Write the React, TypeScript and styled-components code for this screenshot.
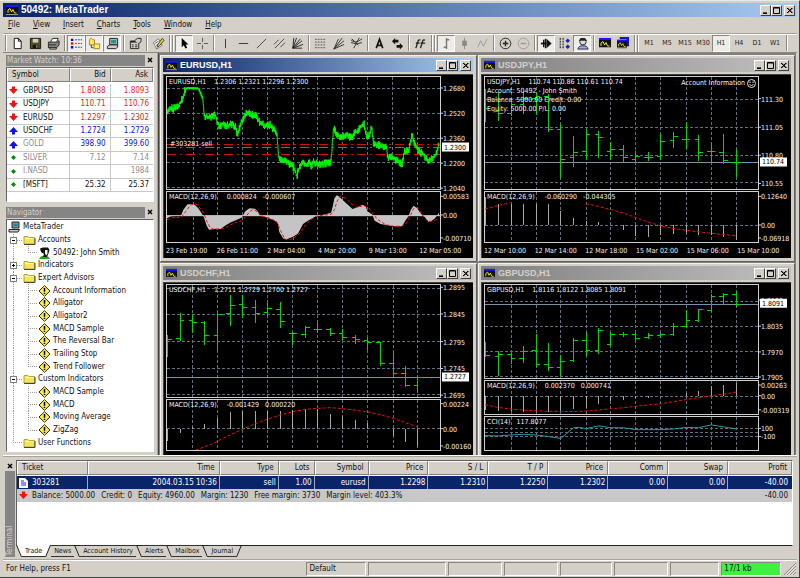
import React from 'react';
import styled, { createGlobalStyle, css } from 'styled-components';

const face = '#d4d0c8';
const shadow = '#808080';
const uiFont = '"DejaVu Sans Condensed", "DejaVu Sans", sans-serif';

const GlobalStyle = createGlobalStyle`
  * { box-sizing: border-box; }
  body { margin: 0; background: ${face}; }
  button { font: inherit; color: inherit; padding: 0; margin: 0; border: 0; background: none; white-space: nowrap; }
  ul { list-style: none; margin: 0; padding: 0; }
`;

/* ---------- frame ---------- */
const Shell = styled.div`
  display: flex; flex-direction: column; height: 100vh; overflow: hidden;
  background: ${face}; color: #111; font: 8px/12px ${uiFont};
  padding: 2px 2px 1px 3px;
  border-right: 1px solid #404040; border-bottom: 1px solid #404040; border-top: 1px solid #ece9e2;
`;
const TitleBar = styled.header<{ $active?: boolean; $main?: boolean }>`
  display: flex; align-items: center; gap: 3px; flex: none;
  height: 14px; margin: 0; padding: 0 2px 0 3px;
  font: bold ${p => (p.$main ? 10 : 9)}px/14px "Liberation Sans", Arial, sans-serif;
  color: ${p => (p.$active ? '#fff' : face)};
  background: ${p => (p.$active ? 'linear-gradient(90deg,#0a246a,#a6caf0)' : 'linear-gradient(90deg,#808080,#c0c0c0)')};
`;
const TitleText = styled.span`flex: 1; white-space: nowrap;`;
const CaptionButton = styled.button<{ $gap?: boolean }>`
  width: 11px; height: 11px; display: flex; margin-left: ${p => (p.$gap ? 2 : 0)}px;
  background: ${face}; border: 1px solid; border-color: #fff #404040 #404040 #fff;
`;
const CaptionButtons = styled.div`display: flex;`;

const Glyph = ({ d }: { d: string }) => (
  <svg width="9" height="9" viewBox="0 0 9 9" fill="none" stroke="#000"><path d={d} /></svg>
);
const WindowButtons = () => (
  <CaptionButtons>
    <CaptionButton aria-label="Minimize"><Glyph d="M2 7.5H6M2 6.9H6" /></CaptionButton>
    <CaptionButton aria-label="Maximize"><Glyph d="M1.5 1.5H7.5V7.5H1.5ZM1.5 2H7.5" /></CaptionButton>
    <CaptionButton $gap aria-label="Close"><Glyph d="M2 2L7 7M7 2L2 7M2.5 2L7.5 7M7.5 2L2.5 7" /></CaptionButton>
  </CaptionButtons>
);
const ChartIcon = ({ size = 12, stacked }: { size?: number; stacked?: boolean }) => (
  <svg width={size} height={size} viewBox="0 0 12 12">
    {stacked && <path d="M3 0H12V9H10V2H3Z" fill="#1818ff" stroke="#111" strokeWidth="0.5" />}
    <svg width={stacked ? 10 : 12} height={stacked ? 10 : 12} y={stacked ? 2 : 0} viewBox="0 0 12 12">
      <rect x="0" y="1" width="12" height="10" fill="#111" />
      <rect x="0" y="1" width="12" height="2" fill="#1818ff" />
      <path d="M0 10.500H12" stroke="#999" />
      <path d="M2 9V6L4 4.500L5.500 8L7 5.500L8.500 9H10.500" stroke="#f0e800" fill="none" />
    </svg>
  </svg>
);

/* ---------- menu and toolbar ---------- */
const Menu = styled.nav`
  display: flex; gap: 13px; height: 16px; align-items: center; padding-left: 5px; flex: none;
`;
const Mnemonic = styled.span`text-decoration: underline;`;
const Toolbar = styled.div`
  display: flex; align-items: center; height: 20px; flex: none;
  border-top: 1px solid #a8a49c; border-bottom: 1px solid #8c8880; box-shadow: inset 0 1px #fff;
`;
const Tool = styled.button<{ $on?: boolean }>`
  width: 18px; height: 17px; display: flex; align-items: center; justify-content: center;
  font-size: 7px; color: #222;
  ${p => p.$on && css`background: #eeece8; border: 1px solid; border-color: #8a867e #fff #fff #8a867e;`}
`;
const Sep = styled.i`
  width: 1px; height: 16px; margin: 0 2px; background: #8c8880; box-shadow: 1px 0 #fff;
`;
const Grip = styled.i`
  width: 4px; height: 17px; margin: 0 2px 0 2px; border-left: 1px solid #8c8880; border-right: 1px solid #8c8880;
  box-shadow: inset 1px 0 #fff, 1px 0 #fff;
`;

const icons: Record<string, React.ReactNode> = {
  new: <path d="M3.500 1.500H8L11 4.500V12.500H3.500ZM8 1.500V4.500H11" fill="#fff" stroke="#111" />,
  save: <><path d="M1.500 1.500H12.500V12.500H1.500Z" fill="#55501c" stroke="#111" /><path d="M4 2H10V6H4Z" fill="#d4d0c8" /><path d="M4 8.500H10V12H4Z" fill="#111" /><path d="M8.500 9V11.500" stroke="#ddd" /></>,
  print: <><path d="M4 5L6 1.500H12L10.500 5" fill="#fff" stroke="#222" /><path d="M1.500 5.500H11L13 4V8.500L10.500 11.500H1.500Z" fill="#888" stroke="#222" /><path d="M3 11.500H10V13H3Z" fill="#eee" stroke="#222" /><path d="M2 8.500H10" stroke="#222" /></>,
  list: <><path d="M1 3H3.500M1 11H3.500" stroke="#00f" strokeWidth="2.500" /><path d="M1 7H3.500" stroke="#e00" strokeWidth="2.500" /><path d="M5.500 3H13M5.500 11H13" stroke="#33a" strokeDasharray="2 1" /><path d="M5.500 7H13" stroke="#a33" strokeDasharray="2 1" /></>,
  navigator: <><path d="M1.500 3V8.500H7V3H5L4 1.500H2.500Z" fill="#ffe65c" stroke="#a08a20" /><path d="M3.500 8.500V11.500H6" stroke="#333" fill="none" /><path d="M6.500 7.500H12.500V12.500H6.500Z" fill="#ffec70" stroke="#a08a20" /></>,
  terminal: <><path d="M4 1.500H12.500V8.500H4Z" fill="#bbb" stroke="#222" /><path d="M5.500 3H11V7H5.500Z" fill="#1a9a9a" /><path d="M1.500 10L4 8.500H12.500V11L10.500 12.500H1.500Z" fill="#ccc" stroke="#222" /></>,
  props: <><path d="M1.500 4.500H10.500V12.500H1.500Z" fill="#d4d0c8" stroke="#222" /><path d="M1.500 5H10.500" stroke="#222" strokeWidth="2" /><path d="M3 8.500H5M3 10.500H5M6.500 8.500H9M6.500 10.500H9" stroke="#222" /><path d="M6 4L9 1.500H13V5L10.500 7" fill="#ccc" stroke="#222" /></>,
  edit: <><path d="M1.500 6L7 2L11 9L5 13Z" fill="#fff" stroke="#777" /><path d="M3 7L7 4.500M4.500 9L8 6.500" stroke="#44a" /><path d="M5.500 11L6 8.500L11 1.500L13 3.500L8 9.500Z" fill="#f0d820" stroke="#333" /></>,
  cursor: <path d="M4 1V11L6.200 8.800L8 12.500L9.800 11.700L8.200 8.200H11.200Z" fill="#000" />,
  cross: <path d="M7 1V5.500M7 8.500V13M1 7H5.500M8.500 7H13" stroke="#555" />,
  vline: <path d="M7 2V12" stroke="#333" />,
  hline: <path d="M2 7H12" stroke="#333" />,
  trend: <path d="M2 12L12 2" stroke="#444" />,
  channel: <path d="M1 8L6 3M2 12L12 2M8 11L13 6" stroke="#444" fill="none" />,
  gann: <path d="M2 12L3 1M2 12L6 1M2 12L10 2M2 12L12 4M2 12L13 8M2 12H12" stroke="#222" />,
  fibo: <path d="M1 2.500H13M1 5.500H13M1 8.500H13M1 11.500H13" stroke="#555" strokeDasharray="2 1" />,
  fan: <path d="M2 13L11 1M2 13L13 4M2 13L13 8M2 13L7 2" stroke="#333" />,
  arcs: <path d="M1 3Q5 8 13 2M1 6Q7 9 13 6M4 12L10 1M2 2L9 9" stroke="#333" fill="none" />,
  text: <path d="M3.500 12L7 2.500L10.500 12M4.500 9H9.500" stroke="#111" strokeWidth="1.800" fill="none" />,
  arrows: <><path d="M1 4.500L4.500 1V3H8V6H4.500V8Z" fill="#111" /><path d="M13 10L9.500 13.500V11.500H6V8.500H9.500V6.500Z" fill="#111" /></>,
  func: <path d="M2 12L4.500 4Q5 2.500 7 3.500M2 6.500H6M7 12L9.500 4Q10 2.500 12 3.500M7 6.500H12" stroke="#222" strokeWidth="1.400" fill="none" />,
  bars: <path d="M7 1V13M4 11H7M7 3H10" stroke="#777" strokeWidth="1.500" fill="none" />,
  candle: <><path d="M7 1V13" stroke="#888" /><path d="M4.500 4H9.500V9.500H4.500Z" fill="#888" /></>,
  line: <path d="M2 11L5 4L8 10L12 2" stroke="#999" fill="none" />,
  zoomin: <><circle cx="7" cy="7" r="5.700" fill="none" stroke="#222" /><path d="M4 7H10M7 4V10" stroke="#222" strokeWidth="1.500" /></>,
  zoomout: <><circle cx="7" cy="7" r="5.700" fill="none" stroke="#999" /><path d="M4 7H10" stroke="#999" strokeWidth="1.500" /></>,
  scroll: <><path d="M4 3V11M6 2V12" stroke="#111" strokeWidth="1.500" /><path d="M7 2L12.500 7L7 12Z" fill="#111" /><path d="M1 7H7" stroke="#111" strokeWidth="2" /></>,
  shift: <><path d="M2.500 1V13M5.500 1V13" stroke="#444" strokeWidth="1.500" strokeDasharray="2 1" /><path d="M8 4L10.500 1.500L13 4L10.500 6.500ZM8 10.500L10.500 8L13 10.500L10.500 13Z" fill="#22a" /></>,
  expert: <><circle cx="7.500" cy="5" r="3.500" fill="#ddd" stroke="#222" /><path d="M3 4H12L9.500 1H5Z" fill="#222" /><path d="M2 13Q3 9 7.500 9.500Q12 9 13 13Z" fill="#9ab0e8" stroke="#224" /></>,
};
const ToolIcon = ({ name }: { name: string }) => (
  <svg width="13" height="13" viewBox="0 0 14 14">{icons[name]}</svg>
);

const tools = [
  'new', 'save', 'print', '|', '*list', '*navigator', '*terminal', '|', 'props', '|', 'edit', '#',
  '*cursor', 'cross', '|', 'vline', 'hline', 'trend', 'channel', 'gann', '|', 'fibo', 'fan', 'arcs', '|',
  'text', 'arrows', '|', 'func', '#', '*bars', 'candle', 'line', '|', 'zoomin', 'zoomout', '|',
  '*scroll', 'shift', '*expert', '|', 'chart', 'charts', '#',
];
const periods = ['M1', 'M5', 'M15', 'M30', 'H1', 'H4', 'D1', 'W1'];

/* ---------- docked panels ---------- */
const Body = styled.div`display: flex; flex: 1; min-height: 0;`;
const Dock = styled.aside`
  width: 155px; flex: none; padding: 1px 3px 3px; display: flex; flex-direction: column; gap: 4px;
  border-right: 1px solid #a8a49c;
`;
const Panel = styled.section<{ $grow?: boolean }>`
  display: flex; flex-direction: column; min-height: 0; ${p => p.$grow && css`flex: 1;`}
`;
const PanelHead = styled.header`display: flex; align-items: center; height: 12px; flex: none; margin-bottom: 1px;`;
const PanelTitle = styled.span`flex: 1; height: 11px; line-height: 11px; background: #858585; color: ${face}; padding-left: 1px;`;
const PanelClose = styled.button`
  width: 9px; height: 11px; display: flex; align-items: center; justify-content: center;
`;
const CloseX = () => (
  <svg width="6" height="6" viewBox="0 0 6 6"><path d="M1 1L5 5M5 1L1 5" stroke="#000" strokeWidth="1.500" /></svg>
);
const Sunken = styled.div`
  background: #fff; border: 1px solid; border-color: #606060 #fff #fff #606060; overflow: hidden;
`;
const WatchBox = styled(Sunken)`height: 135px;`;
const HeadCell = styled.th<{ $left?: boolean }>`
  height: 14px; padding: 0 4px; font-weight: normal; text-align: ${p => (p.$left ? 'left' : 'right')};
  background: ${face}; border: 1px solid; border-color: #fff #808080 #808080 #fff;
`;
const Watch = styled.table`
  width: 100%; height: 124px; border-collapse: separate; border-spacing: 0; table-layout: fixed;
  tbody::before { content: ''; display: block; height: 2px; }
`;
const WatchCell = styled.td<{ $last?: boolean }>`
  padding: 0 4px; text-align: right; border-bottom: 1px solid #c8c8c8; line-height: 10px;
  border-right: ${p => (p.$last ? '0' : '1px solid #c8c8c8')};
`;
const WatchRow = styled.tr<{ $tone: string }>`
  color: ${p => p.$tone};
`;
const SymbolCell = styled(WatchCell)<{ $tone: string }>`
  text-align: left; padding: 0 0 0 2px; color: ${p => p.$tone};
`;
const SymbolName = styled.span`display: flex; align-items: center; gap: 5px;`;

const Arrow = ({ kind }: { kind: string }) => (
  <svg width="9" height="9" viewBox="0 0 9 9">
    {kind === 'down' && <path d="M3 0.500H6V3H9L4.500 8L0 3H3Z" fill="#f21010" />}
    {kind === 'up' && <path d="M3 8.500H6V6H9L4.500 1L0 6H3Z" fill="#1010f2" />}
    {kind === 'flat' && <path d="M4.500 2L7 4.500L4.500 7L2 4.500Z" fill="#0a8a0a" />}
  </svg>
);
const quotes: [string, string, string, string, string][] = [
  ['GBPUSD', '1.8088', '1.8093', 'down', '#f01818'],
  ['USDJPY', '110.71', '110.76', 'down', '#f01818'],
  ['EURUSD', '1.2297', '1.2302', 'down', '#f01818'],
  ['USDCHF', '1.2724', '1.2729', 'up', '#1010e0'],
  ['GOLD', '398.90', '399.60', 'up', '#1010e0'],
  ['SILVER', '7.12', '7.14', 'flat', '#8c8c8c'],
  ['I.NASD', '', '1984', 'flat', '#8c8c8c'],
  ['[MSFT]', '25.32', '25.37', 'flat', '#111'],
];

const TreeBox = styled(Sunken)`flex: 1; padding: 1px 0 2px;`;
const Tree = styled.ul`height: 100%; display: grid; grid-auto-rows: 1fr;`;
const Node = styled.li`display: flex; min-height: 0; align-items: center; white-space: nowrap;`;
const NodeIcon = styled.span`width: 15px; display: flex; justify-content: center; margin-right: 1px; flex: none;`;
const GuideSvg = styled.svg`width: 15px; height: 100%; flex: none;`;

const Guide = ({ kind }: { kind: string }) => (
  <GuideSvg stroke="#999" strokeDasharray="1 1" shapeRendering="crispEdges">
    {kind !== ' ' && <line x1="6.500" x2="6.500" y1="0" y2={kind === 'L' ? '50%' : '100%'} />}
    {kind !== ' ' && kind !== 'I' && <line x1="6" x2="15" y1="50%" y2="50%" />}
    {(kind === '-' || kind === '+') && (
      <svg x="3" y="3" width="7" height="7" viewBox="0 0 7 7" strokeDasharray="none">
        <rect x="0.500" y="0.500" width="6" height="6" fill="#fff" stroke="#808080" />
        <path d={kind === '+' ? 'M2 3.500H5M3.500 2V5' : 'M2 3.500H5'} stroke="#000" />
      </svg>
    )}
  </GuideSvg>
);
const TreeIcon = ({ kind }: { kind: string }) => (
  <svg width="13" height="12" viewBox="0 0 13 12">
    {kind === 'pc' && <><path d="M4 1H11V7H4Z" fill="#999" stroke="#222" /><path d="M5.500 2.500H9.500V5.500H5.500Z" fill="#1a8a9a" /><path d="M1 8.500H11.500L10 11H1Z" fill="#ccc" stroke="#222" /></>}
    {kind === 'folder' && <><path d="M1 10V2.500H5L6 3.500H11.500V10Z" fill="#f4e55a" stroke="#b5a53c" /><path d="M1 10.500H12V4" stroke="#444" fill="none" /><path d="M2 4.500H11" stroke="#fff8a8" /></>}
    {kind === 'user' && <><path d="M1 12Q3 8 6.500 9Q10 8 12 12Z" fill="#19a819" /><path d="M2 1.500L5 0.500H10L11.500 3L10 8L8.500 10H5L6 7L3 5Z" fill="#111" /><path d="M7 3H9.500V7L8 8.500L7 6Z" fill="#fff" /></>}
    {kind === 'ea' && <><path d="M6.500 0.700L12 6L6.500 11.300L1 6Z" fill="#fbee45" stroke="#2a2a10" /><path d="M6.500 3V6.700M6.500 7.800V9" stroke="#000" strokeWidth="1.500" /></>}
  </svg>
);
const nodes: [string, string, string][] = [
  ['', 'pc', 'MetaTrader'],
  ['-', 'folder', 'Accounts'],
  ['IL', 'user', '50492: John Smith'],
  ['+', 'folder', 'Indicators'],
  ['-', 'folder', 'Expert Advisors'],
  ['IT', 'ea', 'Account Information'],
  ['IT', 'ea', 'Alligator'],
  ['IT', 'ea', 'Alligator2'],
  ['IT', 'ea', 'MACD Sample'],
  ['IT', 'ea', 'The Reversal Bar'],
  ['IT', 'ea', 'Trailing Stop'],
  ['IL', 'ea', 'Trend Follower'],
  ['-', 'folder', 'Custom Indicators'],
  ['IT', 'ea', 'MACD Sample'],
  ['IT', 'ea', 'MACD'],
  ['IT', 'ea', 'Moving Average'],
  ['IL', 'ea', 'ZigZag'],
  ['L', 'folder', 'User Functions'],
];

/* ---------- chart windows ---------- */
const Workspace = styled.main`
  flex: 1; min-width: 0; overflow: hidden; background: ${shadow}; padding: 2px 1px 0;
  display: grid; grid-template-columns: 1fr 1fr; grid-auto-rows: 207px; gap: 1px;
  border-left: 1px solid #404040; border-right: 1px solid ${face};
`;
const ChildWindow = styled.section`
  display: flex; flex-direction: column; min-width: 0; background: ${face}; padding: 2px 3px 3px 2px;
  border: 1px solid; border-color: #f4f2ee #606060 #606060 #f4f2ee;
`;
const ChartArea = styled.div`
  flex: 1; min-height: 0; margin-top: 2px; padding: 1px 0 0 2px; background: #000; color: #f0f0f0;
  display: flex; flex-direction: column; gap: 1px; border: 1px solid #404040; border-width: 1px 0 0 1px;
  font-size: 7px; line-height: 9px;
`;
const Pane = styled.div<{ $grow: number }>`
  display: flex; min-height: 0; flex: ${p => p.$grow} 1 0;
`;
const Plot = styled.div`
  flex: 1; min-width: 0; position: relative; border: 1px solid #d0d0d0;
`;
const PlotSvg = styled.svg`
  display: block; width: 100%; height: 100%; position: absolute; inset: 0;
  & * { vector-effect: non-scaling-stroke; }
`;
const Overlay = styled.div`position: absolute; top: 1px; left: 2px; white-space: pre; line-height: 9px;`;
const OverlayRight = styled.div`
  position: absolute; top: 2px; right: 2px; display: flex; align-items: center; gap: 2px; white-space: nowrap;
`;
const OrderLabel = styled.div`position: absolute; top: 56%; left: 3px;`;
const AxisSvg = styled.svg`width: 32px; height: 100%; flex: none; overflow: visible; fill: #f0f0f0;`;
const Dates = styled.div`
  height: 14px; flex: none; display: grid; grid-template-columns: repeat(6, 1fr); align-items: center; white-space: nowrap;
  margin-right: 3px;
`;

type Pt = [number, number];
type Range = { x: number; w: number; y: number; h: number };
const pts = (list: Pt[]) => list.map(p => p.join(',')).join(' ');

const Grid = ({ r, xs, ys }: { r: Range; xs: number[]; ys: number[] }) => (
  <g stroke="#5f6f80" strokeDasharray="3 2" shapeRendering="crispEdges">
    {xs.map(x => <line key={'v' + x} x1={x} x2={x} y1={r.y} y2={r.y + r.h} />)}
    {ys.map(y => <line key={'h' + y} x1={r.x} x2={r.x + r.w} y1={y} y2={y} />)}
  </g>
);

type PaneProps = {
  r: Range; xs: number[]; ys?: number[]; labels: [string, number][];
  price?: [string, number]; children?: React.ReactNode; overlay?: React.ReactNode;
};
const ChartPane = ({ r, xs, ys = [], labels, price, children, overlay }: PaneProps) => {
  const pct = (y: number) => `${((y - r.y) / r.h) * 100}%`;
  return (
    <Pane $grow={r.h}>
      <Plot>
        <PlotSvg viewBox={`${r.x} ${r.y} ${r.w} ${r.h}`} preserveAspectRatio="none">
          <Grid r={r} xs={xs} ys={ys} />
          {children}
        </PlotSvg>
        {overlay}
      </Plot>
      <AxisSvg>
        {labels.map(([t, y]) => (
          <g key={t}>
            <line x1="0" x2="2" y1={pct(y)} y2={pct(y)} stroke="#d0d0d0" />
            <text x="2" y={pct(y)} dy="3">{t}</text>
          </g>
        ))}
        {price && (
          <svg y={pct(price[1])} overflow="visible">
            <rect x="1" y="-5" width="27" height="9" fill="#fff" />
            <text x="3" y="2" fill="#000">{price[0]}</text>
          </svg>
        )}
      </AxisSvg>
    </Pane>
  );
};

/* x, high, low, open, close */
type Bar = [number, number, number, number, number];
const Ohlc = ({ bars }: { bars: Bar[] }) => (
  <g stroke="#00d800" shapeRendering="crispEdges">
    {bars.map(([x, h, l, o, c]) => (
      <path key={x} d={`M${x} ${h}V${l}M${x - 12} ${o}H${x}M${x} ${c}H${x + 13}`} fill="none" />
    ))}
  </g>
);
const Histogram = ({ zero, bars }: { zero: number; bars: Pt[] }) => (
  <g stroke="#a8a8a8" shapeRendering="crispEdges">
    {bars.map(([x, y]) => <line key={x} x1={x} x2={x} y1={zero} y2={y} />)}
  </g>
);
const Signal = ({ list }: { list: Pt[] }) => (
  <polyline points={pts(list)} fill="none" stroke="#f01010" strokeDasharray="3 2" />
);

const shiftX = (dx: number, list: Pt[]): Pt[] => list.map(([x, y]) => [x + dx, y]);

const eurKeys: Pt[] = [
  [18, 165], [30, 160], [45, 158], [55, 150], [65, 130], [70, 115], [73, 100], [80, 97], [112, 98], [118, 110], [126, 125],
  [130, 172], [133, 185], [150, 185], [165, 180], [172, 205], [178, 215], [185, 205], [200, 212], [215, 208], [225, 215],
  [231, 238], [240, 212], [250, 188], [262, 170], [275, 178], [290, 185], [300, 205], [315, 212], [330, 210], [345, 230],
  [352, 240], [355, 300], [360, 318], [375, 318], [395, 333], [405, 345], [411, 370], [416, 345], [430, 322], [440, 335],
  [450, 320], [455, 340], [460, 325],
  ...shiftX(465, [
    [0, 325], [10, 330], [50, 325], [54, 260], [58, 215], [65, 235], [80, 250], [95, 240], [110, 250], [125, 232], [140, 215],
    [150, 207], [158, 245], [168, 240], [173, 212], [178, 265], [190, 270], [210, 278], [217, 268], [222, 310], [235, 307],
    [250, 320], [265, 330], [272, 290], [285, 290], [295, 243], [305, 270], [315, 290], [330, 300], [342, 318], [360, 310],
    [370, 295], [377, 268],
  ]),
];
const jitter = (i: number) => {
  const v = Math.sin(i * 12.9898) * 43758.5453;
  return v - Math.floor(v);
};
const eurSeries: Pt[] = (() => {
  const out: Pt[] = [];
  let k = 0;
  for (let i = 0; 18 + i * 1.5 <= 842; i++) {
    const x = 18 + i * 1.5;
    while (k < eurKeys.length - 2 && eurKeys[k + 1][0] < x) k++;
    const [x0, y0] = eurKeys[k];
    const [x1, y1] = eurKeys[k + 1];
    const y = y0 + ((y1 - y0) * (x - x0)) / (x1 - x0);
    const calm = x > 74 && x < 112;
    const spread = calm ? 3 : 2 + 11 * jitter(i);
    out.push([x, Math.max(94, y + (i % 2 ? spread : -spread))]);
  }
  return out;
})();
const eurMacd: Pt[] = [
  [18, 492], [30, 486], [60, 484], [68, 465], [80, 448], [100, 448], [112, 460], [122, 475], [130, 490], [138, 515], [145, 528],
  [165, 525], [180, 526], [195, 515], [210, 505], [230, 497], [245, 490], [255, 470], [268, 461], [285, 462], [292, 470],
  [300, 484], [320, 490], [345, 500], [355, 510], [358, 535], [370, 555], [380, 558], [400, 550], [415, 540], [430, 510],
  [445, 500],
  ...shiftX(465, [
    [0, 488], [10, 485], [30, 480], [50, 475], [55, 455], [60, 430], [67, 420], [75, 425], [90, 440], [115, 463], [130, 458],
    [145, 450], [155, 455], [160, 470], [175, 480], [182, 500], [200, 510], [225, 515], [240, 517], [265, 517], [275, 500],
    [285, 485], [292, 465], [300, 453], [310, 460], [320, 475], [335, 490], [345, 503], [355, 500], [365, 492], [377, 475],
  ]),
];
const eurSignal: Pt[] = [
  [18, 497], [35, 490], [62, 489], [75, 470], [90, 450], [105, 447], [118, 460], [130, 478], [138, 500], [148, 520], [160, 527],
  [190, 524], [220, 508], [245, 500], [258, 485], [270, 470], [280, 464], [295, 475], [305, 485], [330, 492], [350, 502],
  [362, 530], [375, 557], [385, 560], [400, 555], [420, 540], [440, 510],
  ...shiftX(465, [
    [0, 487], [20, 483], [50, 480], [60, 465], [68, 440], [77, 423], [95, 430], [110, 445], [125, 458], [150, 453], [165, 460],
    [175, 475], [190, 495], [215, 512], [240, 517], [265, 517], [280, 505], [292, 480], [300, 462], [312, 458], [325, 480],
    [340, 498], [355, 503], [370, 495],
  ]),
];
const eurXs = [97, 172, 247, 322, 400, 475, 551, 625, 702, 778];
const jpyXs = [102, 178, 253, 329, 404, 480, 556, 632, 708, 784];
const chfXs = [96, 172, 248, 323, 399, 475, 551, 626, 703, 778];

const jpyBars: Bar[] = [
  [26, 100, 200, 160, 160], [64, 108, 198, 168, 175], [102, 130, 182, 175, 148], [140, 105, 175, 148, 130],
  [178, 110, 180, 130, 122], [215, 115, 230, 122, 223], [253, 208, 372, 223, 314], [291, 245, 338, 310, 295],
  [329, 222, 318, 290, 238], [367, 228, 310, 238, 247], [404, 262, 318, 290, 284], [442, 270, 324, 286, 310],
  [480, 290, 326, 314, 307], [518, 293, 320, 310, 310], [556, 237, 318, 307, 259], [594, 230, 280, 256, 246],
  [632, 200, 282, 253, 255], [670, 240, 320, 253, 295], [708, 265, 322, 292, 292], [745, 237, 328, 295, 320],
  [784, 282, 370, 324, 324],
];
const jpyMacd: Pt[] = [
  [26, 425], [64, 448], [102, 448], [140, 448], [178, 448], [215, 447], [253, 470], [291, 490], [329, 500], [367, 504],
  [404, 512], [442, 528], [480, 546], [518, 550], [556, 545], [594, 542], [632, 537], [670, 543], [708, 545], [745, 552],
  [784, 561],
];
const chfBars: Bar[] = [
  [20, 220, 288, 233, 233], [58, 153, 238, 230, 175], [96, 157, 215, 176, 181], [133, 177, 250, 181, 220],
  [172, 153, 270, 220, 156], [210, 97, 193, 154, 130], [248, 98, 168, 127, 135], [286, 113, 182, 136, 154],
  [323, 122, 162, 152, 139], [361, 118, 200, 142, 178], [399, 210, 250, 216, 216], [437, 192, 230, 217, 197],
  [475, 180, 213, 202, 202], [513, 200, 224, 202, 214], [551, 202, 236, 214, 228], [589, 219, 249, 229, 235],
  [626, 230, 265, 236, 242], [664, 240, 315, 244, 307], [703, 272, 343, 307, 338], [740, 315, 380, 338, 373],
  [778, 345, 396, 375, 349],
];
const chfMacd: Pt[] = [
  [20, 545], [58, 518], [96, 500], [133, 490], [172, 472], [210, 453], [248, 450], [286, 450], [323, 450], [361, 450],
  [399, 447], [437, 445], [475, 445], [513, 459], [551, 467], [589, 477], [626, 487], [703, 527], [740, 548], [778, 563],
];
const gbpBars: Bar[] = [
  [26, 242, 288, 283, 283], [64, 268, 346, 286, 278], [102, 275, 308, 280, 290], [139, 254, 305, 290, 270],
  [178, 218, 316, 268, 311], [215, 245, 328, 311, 319], [253, 282, 345, 320, 299], [291, 228, 302, 298, 235],
  [329, 213, 285, 235, 267], [367, 198, 277, 268, 205], [404, 210, 252, 248, 219], [442, 210, 225, 219, 219],
  [480, 213, 235, 219, 229], [518, 212, 232, 226, 222], [556, 213, 230, 221, 219], [594, 183, 223, 219, 193],
  [632, 142, 197, 193, 174], [670, 140, 180, 174, 143], [708, 94, 150, 144, 101], [745, 90, 128, 102, 97],
  [784, 85, 135, 97, 127],
];
const gbpMacd: Pt[] = [
  [26, 450], [64, 452], [102, 453], [139, 455], [178, 455], [215, 457], [253, 455], [291, 447], [329, 445], [367, 432],
  [404, 420], [442, 419], [480, 412], [518, 413], [632, 397], [670, 390], [708, 375], [745, 370], [784, 363],
];

const PriceLine = ({ y }: { y: number }) => (
  <line x1="0" x2="900" y1={y} y2={y} stroke="#7f90a0" shapeRendering="crispEdges" />
);
const Smile = () => (
  <svg width="9" height="9" viewBox="0 0 9 9" fill="none" stroke="#ddd">
    <circle cx="4.500" cy="4.500" r="4" /><path d="M2.500 5.500Q4.500 7.500 6.500 5.500" /><path d="M3 2.500V4M6 2.500V4" />
  </svg>
);

const ChartWindow = ({ title, active, dates, children }: {
  title: string; active?: boolean; dates: string[]; children: React.ReactNode;
}) => (
  <ChildWindow>
    <TitleBar $active={active}><ChartIcon size={11} /><TitleText>{title}</TitleText><WindowButtons /></TitleBar>
    <ChartArea>
      {children}
      <Dates>{dates.map(d => <span key={d}>{d}</span>)}</Dates>
    </ChartArea>
  </ChildWindow>
);

const Eurusd = () => (
  <ChartWindow title="EURUSD,H1" active
    dates={['23 Feb 19:00', '26 Feb 11:00', '2 Mar 04:00', '4 Mar 20:00', '9 Mar 13:00', '12 Mar 05:00']}>
    <ChartPane r={{ x: 18, w: 827, y: 63, h: 342 }} xs={eurXs} ys={[99, 175, 250, 325, 402]}
      labels={[['1.2680', 99], ['1.2520', 175], ['1.2360', 250], ['1.2200', 325], ['1.2040', 400]]}
      price={['1.2300', 278]}
      overlay={<><Overlay>EURUSD,H1    1.2306 1.2321 1.2296 1.2300</Overlay><OrderLabel>#303281 sell</OrderLabel></>}>
      <g shapeRendering="crispEdges">
        <path d="M18 271H845M18 300H845" stroke="#d01010" strokeDasharray="9 4 2 4" />
        <path d="M18 279H845" stroke="#2a9a2a" strokeDasharray="9 4 2 4" />
      </g>
      <polyline points={pts(eurSeries)} fill="none" stroke="#00f800" />
    </ChartPane>
    <ChartPane r={{ x: 18, w: 827, y: 410, h: 157 }} xs={eurXs}
      labels={[['0.00583', 426], ['0.00', 482], ['-0.00710', 551]]}
      overlay={<Overlay>MACD(12,26,9)     0.000824   -0.000607</Overlay>}>
      <polygon points={`18,484 ${pts(eurMacd)} 842,484`} fill="#c4c4c4" />
      <path d="M18 484H845" stroke="#d0d0d0" />
      <Signal list={eurSignal} />
    </ChartPane>
  </ChartWindow>
);
const Usdjpy = () => (
  <ChartWindow title="USDJPY,H1"
    dates={['12 Mar 10:00', '12 Mar 14:00', '12 Mar 18:00', '15 Mar 02:00', '15 Mar 06:00', '15 Mar 10:00']}>
    <ChartPane r={{ x: 23, w: 827, y: 63, h: 342 }} xs={jpyXs} ys={[131, 217, 302, 387]}
      labels={[['111.30', 131], ['111.05', 217], ['110.80', 301], ['110.55', 386]]}
      price={['110.74', 323]}
      overlay={<>
        <Overlay>{'USDJPY,H1    110.74 110.86 110.61 110.74\nAccount: 50492 - John Smith\nBalance: 5000.00 Credit: 0.00\nEquity: 5000.00 P/L: 0.00'}</Overlay>
        <OverlayRight>Account Information<Smile /></OverlayRight>
      </>}>
      <PriceLine y={324} />
      <Ohlc bars={jpyBars} />
    </ChartPane>
    <ChartPane r={{ x: 23, w: 827, y: 410, h: 157 }} xs={jpyXs} ys={[514]}
      labels={[['0.12640', 426], ['0.00', 512], ['-0.06918', 551]]}
      overlay={<Overlay>MACD(12,26,9)     -0.060290   -0.044305</Overlay>}>
      <Histogram zero={514} bars={jpyMacd} />
      <Signal list={[[23, 463], [60, 453], [100, 444]]} />
      <Signal list={[[329, 446], [405, 465], [440, 475], [480, 490], [520, 505], [556, 516], [600, 525], [650, 532], [700, 538], [784, 547]]} />
    </ChartPane>
  </ChartWindow>
);
const Usdchf = () => (
  <ChartWindow title="USDCHF,H1" dates={[]}>
    <ChartPane r={{ x: 18, w: 827, y: 67, h: 342 }} xs={chfXs} ys={[77, 157, 240, 321, 402]}
      labels={[['1.2895', 77], ['1.2845', 157], ['1.2795', 240], ['1.2745', 321], ['1.2695', 401]]}
      price={['1.2727', 348]}
      overlay={<Overlay>USDCHF,H1    1.2711 1.2729 1.2700 1.2727</Overlay>}>
      <PriceLine y={349} />
      <Ohlc bars={chfBars} />
    </ChartPane>
    <ChartPane r={{ x: 18, w: 827, y: 416, h: 157 }} xs={chfXs} ys={[506]}
      labels={[['0.00224', 430], ['0.00', 505], ['-0.00160', 557]]}
      overlay={<Overlay>MACD(12,26,9)     -0.001429   0.000220</Overlay>}>
      <Histogram zero={506} bars={chfMacd} />
      <Signal list={[[105, 573], [150, 555], [210, 525], [248, 507], [285, 490], [323, 476], [361, 463], [400, 452], [437, 445], [475, 442], [513, 440], [551, 443], [589, 448], [626, 453], [664, 462], [703, 473], [740, 487], [778, 500]]} />
    </ChartPane>
  </ChartWindow>
);
const Gbpusd = () => (
  <ChartWindow title="GBPUSD,H1" dates={[]}>
    <ChartPane r={{ x: 23, w: 827, y: 67, h: 285 }} xs={jpyXs} ys={[117, 193, 270, 347]}
      labels={[['1.8100', 115], ['1.8035', 193], ['1.7970', 270], ['1.7905', 345]]}
      price={['1.8091', 126]}
      overlay={<Overlay>GBPUSD,H1    1.8116 1.8122 1.8085 1.8091</Overlay>}>
      <PriceLine y={127} />
      <Ohlc bars={gbpBars} />
    </ChartPane>
    <ChartPane r={{ x: 23, w: 827, y: 358, h: 104 }} xs={jpyXs} ys={[406]}
      labels={[['0.00263', 373], ['0.00', 405], ['-0.00319', 447]]}
      overlay={<Overlay>MACD(12,26,9)     0.002370   0.000741</Overlay>}>
      <Histogram zero={406} bars={gbpMacd} />
      <Signal list={[[23, 433], [64, 442], [102, 447], [150, 451], [215, 454], [300, 455], [345, 452], [405, 446], [440, 443], [480, 438], [556, 430], [632, 417], [700, 406], [745, 400], [784, 393]]} />
    </ChartPane>
    <ChartPane r={{ x: 23, w: 827, y: 468, h: 104 }} xs={jpyXs} ys={[505, 517, 529]}
      labels={[[' 100', 505], ['-100', 529]]}
      overlay={<Overlay>CCI(14)   117.8077</Overlay>}>
      <polyline fill="none" stroke="#2a9aa0" points={pts([[23, 527], [64, 528], [102, 525], [139, 523], [178, 525], [215, 530], [253, 536], [291, 502], [310, 501], [329, 505], [367, 496], [404, 502], [442, 502], [480, 508], [556, 508], [594, 506], [632, 501], [670, 502], [708, 493], [745, 499], [784, 506]])} />
    </ChartPane>
  </ChartWindow>
);

/* ---------- terminal ---------- */
const Terminal = styled.section`
  display: flex; flex: none; height: 104px; padding-top: 4px; border-top: 1px solid #fff; box-shadow: inset 0 1px #a8a49c;
`;
const TerminalSide = styled.div`
  width: 13px; flex: none; display: flex; flex-direction: column; align-items: center;
`;
const TerminalTitle = styled.span`
  flex: 1; width: 10px; writing-mode: vertical-rl; transform: rotate(180deg); line-height: 10px;
  background: #858585; color: ${face}; margin-bottom: 2px; padding-top: 1px; text-align: left;
`;
const TerminalMain = styled.div`flex: 1; min-width: 0; display: flex; flex-direction: column; padding-right: 4px;`;
const OrdersBox = styled(Sunken)`height: 86px; border-bottom-color: #222; border-right-color: #fff;`;
const Orders = styled.table`
  width: 100%; border-collapse: separate; border-spacing: 0; table-layout: fixed;
`;
const OrderRow = styled.tr`
  background: #0a246a; color: #fff; height: 14px;
`;
const OrderCell = styled.td`
  padding: 0 2px 0 5px; text-align: right; white-space: nowrap; border-right: 1px solid #a0a8c0; border-top: 1px solid #fff;
  &:first-child { padding-left: 2px; }
  &:last-child { border-right: 0; padding-right: 4px; }
`;
const SumRow = styled.tr`background: #c8c8c8; height: 13px;`;
const SumCell = styled.td<{ $right?: boolean }>`
  padding: 0 4px 0 2px; text-align: ${p => (p.$right ? 'right' : 'left')}; white-space: nowrap;
`;
const IconText = styled.span`display: flex; align-items: center; gap: 4px;`;
const Summary = styled.span`display: flex; gap: 6px;`;
const Col = styled.col<{ $w: number }>`width: ${p => p.$w}%;`;
const Tabs = styled.div`display: flex; height: 12px; font-size: 7px; margin-top: -1px;`;
const Tab = styled.button`display: flex; color: #111;`;
const TabText = styled.span<{ $on?: boolean }>`
  padding: 0 3px; background: ${p => (p.$on ? '#fff' : 'none')}; height: 12px;
  border-bottom: 1px solid #333; border-top: ${p => (p.$on ? '1px solid #fff' : '1px solid #333')};
  line-height: 10px;
`;
const TabEdge = ({ lean, fill }: { lean: 'left' | 'right'; fill?: 'before' | 'after' }) => (
  <svg width="6" height="12" viewBox="0 0 6 12">
    {fill === 'after' && <path d="M0.500 0H6V12H5.500Z" fill="#fff" />}
    {fill === 'before' && <path d="M5.500 0H0V12H0.500Z" fill="#fff" />}
    <path d={lean === 'left' ? 'M0.500 0L5.500 12' : 'M5.500 0L0.500 12'} stroke="#222" fill="none" />
  </svg>
);
const cols: [string, number][] = [
  ['Ticket', 71], ['Time', 132], ['Type', 59], ['Lots', 36], ['Symbol', 54], ['Price', 60], ['S / L', 60],
  ['T / P', 60], ['Price', 60], ['Comm', 60], ['Swap', 60], ['Profit', 64],
];
const orderValues = ['2004.03.15 10:36', 'sell', '1.00', 'eurusd', '1.2298', '1.2310', '1.2250', '1.2302', '0.00', '0.00', '-40.00'];
const summary = ['Balance: 5000.00', 'Credit: 0', 'Equity: 4960.00', 'Margin: 1230', 'Free margin: 3730', 'Margin level: 403.3%'];
const tabs = ['Trade', 'News', 'Account History', 'Alerts', 'Mailbox', 'Journal'];

/* ---------- status bar ---------- */
const Status = styled.footer`
  display: grid; flex: none; height: 17px; padding: 2px 0 1px; gap: 2px; align-items: stretch;
  grid-template-columns: 303fr 60fr 78fr 55fr 54fr 52fr 54fr 50fr 60fr 14px;
  border-top: 1px solid #a8a49c; box-shadow: inset 0 1px #fff;
`;
const StatusText = styled.span`padding-left: 3px; line-height: 14px;`;
const StatusPane = styled.span<{ $live?: boolean }>`
  border: 1px solid; border-color: #8c8880 #fff #fff #8c8880; padding-left: 2px; line-height: 12px; white-space: nowrap;
  background: ${p => (p.$live ? '#3cf23c' : 'none')};
`;
const SizeGrip = () => (
  <svg width="13" height="14" viewBox="0 0 13 14" stroke="#8c8880">
    <path d="M1 13L13 1M4 13L13 4M7 13L13 7M10 13L13 10" />
    <path d="M2 13.500L13 2.500M5 13.500L13 5.500M8 13.500L13 8.500" stroke="#fff" strokeWidth="0.700" />
  </svg>
);

export default function App() {
  const total = cols.reduce((s, c) => s + c[1], 0);
  return (
    <Shell>
      <GlobalStyle />
      <TitleBar as="h1" $active $main>
        <ChartIcon /><TitleText>50492: MetaTrader</TitleText><WindowButtons />
      </TitleBar>
      <Menu>
        {['File', 'View', 'Insert', 'Charts', 'Tools', 'Window', 'Help'].map(m => (
          <button key={m}><Mnemonic>{m[0]}</Mnemonic>{m.slice(1)}</button>
        ))}
      </Menu>
      <Toolbar role="toolbar">
        <Sep />
        {tools.map((t, i) => {
          if (t === '|') return <Sep key={i} />;
          if (t === '#') return <Grip key={i} />;
          const name = t.replace('*', '');
          return (
            <Tool key={i} $on={t[0] === '*'} aria-label={name}>
              {name.startsWith('chart') ? <ChartIcon stacked={name === 'charts'} /> : <ToolIcon name={name} />}
            </Tool>
          );
        })}
        {periods.map(p => <Tool key={p} $on={p === 'H1'}>{p}</Tool>)}
        <Sep />
      </Toolbar>
      <Body>
        <Dock>
          <Panel>
            <PanelHead>
              <PanelTitle>Market Watch: 10:36</PanelTitle>
              <PanelClose aria-label="Close Market Watch"><CloseX /></PanelClose>
            </PanelHead>
            <WatchBox>
              <Watch>
                <colgroup><Col $w={43} /><Col $w={28} /><Col $w={29} /></colgroup>
                <thead><tr><HeadCell $left>Symbol</HeadCell><HeadCell>Bid</HeadCell><HeadCell>Ask</HeadCell></tr></thead>
                <tbody>
                  {quotes.map(([s, b, a, k, c]) => (
                    <WatchRow key={s} $tone={c}>
                      <SymbolCell $tone={c === '#8c8c8c' || s === 'GOLD' ? '#8c8c8c' : '#111'}>
                        <SymbolName><Arrow kind={k} />{s}</SymbolName>
                      </SymbolCell>
                      <WatchCell>{b}</WatchCell>
                      <WatchCell $last>{a}</WatchCell>
                    </WatchRow>
                  ))}
                </tbody>
              </Watch>
            </WatchBox>
          </Panel>
          <Panel $grow>
            <PanelHead>
              <PanelTitle>Navigator</PanelTitle>
              <PanelClose aria-label="Close Navigator"><CloseX /></PanelClose>
            </PanelHead>
            <TreeBox>
              <Tree>
                {nodes.map(([g, icon, label], i) => (
                  <Node key={i}>
                    {g.split('').map((k, j) => <Guide key={j} kind={k} />)}
                    <NodeIcon><TreeIcon kind={icon} /></NodeIcon>{label}
                  </Node>
                ))}
              </Tree>
            </TreeBox>
          </Panel>
        </Dock>
        <Workspace>
          <Eurusd />
          <Usdjpy />
          <Usdchf />
          <Gbpusd />
        </Workspace>
      </Body>
      <Terminal>
        <TerminalSide>
          <PanelClose aria-label="Close Terminal"><CloseX /></PanelClose>
          <TerminalTitle>Terminal</TerminalTitle>
        </TerminalSide>
        <TerminalMain>
          <OrdersBox>
            <Orders>
              <colgroup>{cols.map(([, w], i) => <Col key={i} $w={(w / total) * 100} />)}</colgroup>
              <thead><tr>{cols.map(([n], i) => <HeadCell key={i} $left={i === 0}>{n}</HeadCell>)}</tr></thead>
              <tbody>
                <OrderRow>
                  <OrderCell>
                    <IconText>
                      <svg width="9" height="10" viewBox="0 0 9 10"><path d="M0 0H6L9 3V10H0Z" fill="#fff" /><path d="M2 3H5M2 5H7M2 7H7" stroke="#22d" /></svg>
                      303281
                    </IconText>
                  </OrderCell>
                  {orderValues.map((v, i) => <OrderCell key={i}>{v}</OrderCell>)}
                </OrderRow>
                <SumRow>
                  <SumCell colSpan={11}>
                    <IconText><Arrow kind="down" /><Summary>{summary.map(s => <span key={s}>{s}</span>)}</Summary></IconText>
                  </SumCell>
                  <SumCell $right>-40.00</SumCell>
                </SumRow>
              </tbody>
            </Orders>
          </OrdersBox>
          <Tabs role="tablist">
            <TabEdge lean="left" fill="after" />
            {tabs.map((t, i) => (
              <Tab key={t} role="tab" aria-selected={i === 0}>
                <TabText $on={i === 0}>{t}</TabText>
                <TabEdge lean={i === 0 || i === tabs.length - 1 ? 'right' : 'left'} fill={i === 0 ? 'before' : undefined} />
              </Tab>
            ))}
          </Tabs>
        </TerminalMain>
      </Terminal>
      <Status>
        <StatusText>For Help, press F1</StatusText>
        <StatusPane>Default</StatusPane>
        <StatusPane /><StatusPane /><StatusPane /><StatusPane /><StatusPane /><StatusPane />
        <StatusPane $live>17/1 kb</StatusPane>
        <SizeGrip />
      </Status>
    </Shell>
  );
}
